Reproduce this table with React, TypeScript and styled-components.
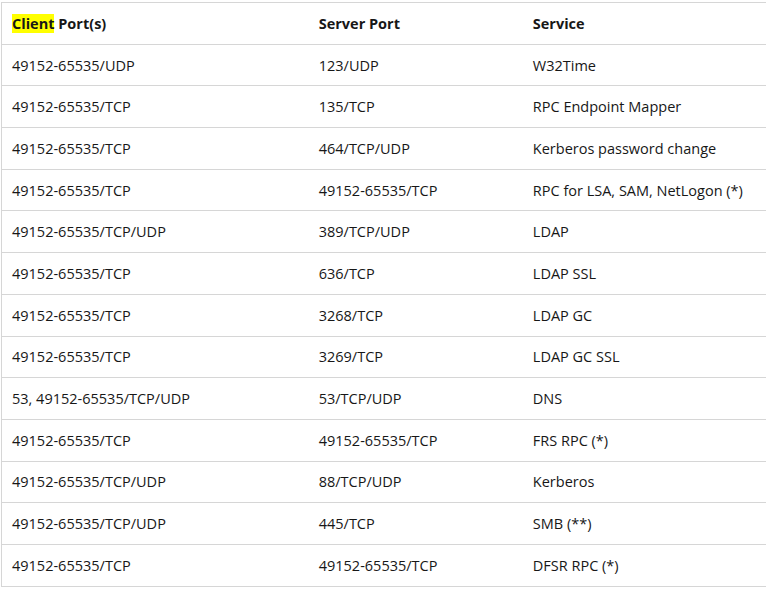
import React from "react";
import styled, { createGlobalStyle } from "styled-components";

const Global = createGlobalStyle`
  html, body { margin: 0; padding: 0; background: #fff; overflow: hidden; }
  body { font-family: "Open Sans", "Noto Sans", sans-serif; color: #171717; }
`;

const Page = styled.div`
  padding: 2px 0 0 1px;
  width: 900px;
`;

const Table = styled.table`
  border-collapse: collapse;
  table-layout: fixed;
  width: 801px;
  border-left: 1px solid #d6d6d6;
  border-top: 1px solid #d6d6d6;
  font-size: 14.5px;
`;

const Row = styled.tr`
  height: 41.7px;
  border-bottom: 1px solid #d6d6d6;
`;

const Th = styled.th<{ $w: number }>`
  box-sizing: border-box;
  text-align: left;
  font-weight: 700;
  padding: 0 10px;
  width: ${(p) => p.$w}px;
`;

const Td = styled.td`
  padding: 0 10px;
  white-space: nowrap;
`;

const Mark = styled.mark`
  background: #ffff00;
  color: inherit;
`;

const rows: [string, string, string][] = [
  ["49152-65535/UDP", "123/UDP", "W32Time"],
  ["49152-65535/TCP", "135/TCP", "RPC Endpoint Mapper"],
  ["49152-65535/TCP", "464/TCP/UDP", "Kerberos password change"],
  ["49152-65535/TCP", "49152-65535/TCP", "RPC for LSA, SAM, NetLogon (*)"],
  ["49152-65535/TCP/UDP", "389/TCP/UDP", "LDAP"],
  ["49152-65535/TCP", "636/TCP", "LDAP SSL"],
  ["49152-65535/TCP", "3268/TCP", "LDAP GC"],
  ["49152-65535/TCP", "3269/TCP", "LDAP GC SSL"],
  ["53, 49152-65535/TCP/UDP", "53/TCP/UDP", "DNS"],
  ["49152-65535/TCP", "49152-65535/TCP", "FRS RPC (*)"],
  ["49152-65535/TCP/UDP", "88/TCP/UDP", "Kerberos"],
  ["49152-65535/TCP/UDP", "445/TCP", "SMB (**)"],
  ["49152-65535/TCP", "49152-65535/TCP", "DFSR RPC (*)"],
];

export default function App() {
  return (
    <Page>
      <Global />
      <Table>
        <thead>
          <Row>
            <Th $w={307}>
              <Mark>Client</Mark> Port(s)
            </Th>
            <Th $w={214}>Server Port</Th>
            <Th $w={279}>Service</Th>
          </Row>
        </thead>
        <tbody>
          {rows.map((r, i) => (
            <Row key={i}>
              <Td>{r[0]}</Td>
              <Td>{r[1]}</Td>
              <Td>{r[2]}</Td>
            </Row>
          ))}
        </tbody>
      </Table>
    </Page>
  );
}
